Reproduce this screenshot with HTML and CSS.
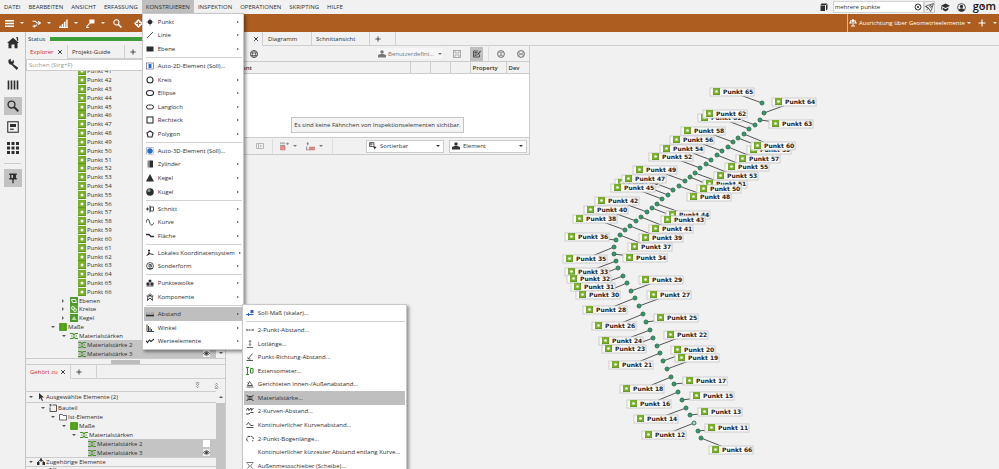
FILE: index.html
```html
<!DOCTYPE html>
<html lang="de">
<head>
<meta charset="utf-8">
<title>GOM Inspect</title>
<link rel="stylesheet" href="styles.css">
</head>
<body>
<svg class="sprite" aria-hidden="true">
  <symbol id="i-burger" viewBox="0 0 16 16"><path d="M0 3h16M0 8h16M0 13h16" stroke-width="2.6"/></symbol>
  <symbol id="i-swap" viewBox="0 0 16 16"><path d="M1 4h5l3 3h6M11 4l4 3-4 3M1 13h5l3-3M4 10v5" stroke-width="1.8"/></symbol>
  <symbol id="i-steps" viewBox="0 0 16 16"><path d="M0 15L16 0V15z" class="f" opacity=".35"/><path d="M2 15v-3M6 15V9M10 15V5M14 15V1M0 15h16" stroke-width="2"/></symbol>
  <symbol id="i-flag" viewBox="0 0 16 16"><path d="M6 1h9v7H8l-2 2z" class="f"/><path d="M6 8L1 14M0 15h5" stroke-width="2"/></symbol>
  <symbol id="i-search" viewBox="0 0 16 16"><circle cx="6" cy="6" r="4.6" stroke-width="1.8"/><path d="M9.5 9.5L15 15" stroke-width="2.8"/></symbol>
  <symbol id="i-target" viewBox="0 0 16 16"><path d="M8 0l8 8-8 8-8-8z" class="f"/><path d="M8 4v8M4 8h8" stroke="#ad5d20" stroke-width="2"/></symbol>
  <symbol id="i-scale" viewBox="0 0 16 16"><path d="M8 1v12M2 4h12M4 14h8" stroke-width="2"/><path d="M0 9l3-5 3 5zM10 9l3-5 3 5z" class="f"/><circle cx="8" cy="3" r="2.5" class="f"/></symbol>
  <symbol id="i-plus" viewBox="0 0 16 16"><path d="M8 1v14M1 8h14" stroke-width="2.2"/></symbol>
  <symbol id="i-x" viewBox="0 0 16 16"><path d="M3 3l10 10M13 3L3 13" stroke-width="2.6"/></symbol>
  <symbol id="i-home" viewBox="0 0 16 16"><path d="M8 1l8 7h-2v7h-4v-5H6v5H2V8H0z" class="f"/><path d="M12 1h2v4" stroke-width="1.6"/></symbol>
  <symbol id="i-wrench" viewBox="0 0 16 16"><path d="M2 6a4 4 0 0 1 3-5v3l2 1 1-3a4 4 0 0 1 0 6l7 5-2 3-7-7a4 4 0 0 1-4-3z" class="f"/></symbol>
  <symbol id="i-bars" viewBox="0 0 16 16"><path d="M2 2v12M6 2v12M10 2v12M14 2v12" stroke-width="2.2"/></symbol>
  <symbol id="i-doc" viewBox="0 0 16 16"><rect x="1" y="1" width="14" height="14" stroke-width="1.4"/><rect x="4" y="4" width="8" height="4" class="f"/><path d="M4 11h5" stroke-width="1.6"/></symbol>
  <symbol id="i-grid" viewBox="0 0 16 16"><path d="M0 0h4v4H0zM6 0h4v4H6zM12 0h4v4h-4zM0 6h4v4H0zM6 6h4v4H6zM12 6h4v4h-4zM0 12h4v4H0zM6 12h4v4H6zM12 12h4v4h-4z" class="f"/></symbol>
  <symbol id="i-pin" viewBox="0 0 16 16"><path d="M3 3h10M5 3v6M11 3v6M3 9h10M8 9v6" stroke-width="1.8"/><path d="M8 3h3v6H8z" class="f"/></symbol>
  <symbol id="i-cube" viewBox="0 0 16 16"><path d="M1 5h9v11H1zM3 1h12l-3 3H1zM12 5l3-3v10l-3 3z" class="f"/></symbol>
  <symbol id="i-clear" viewBox="0 0 16 16"><circle cx="8" cy="8" r="6" stroke-width="1.8"/><path d="M5 5l6 6M11 5l-6 6" stroke-width="1.6"/></symbol>
  <symbol id="i-rocket" viewBox="0 0 16 16"><path d="M1 6l5-2 9-3-3 9-2 5-3-5zM1 6l6 4M3 12l3-2" stroke-width="1.3"/><circle cx="10" cy="6" r="1.6" stroke-width="1.2"/></symbol>
  <symbol id="i-hat" viewBox="0 0 16 16"><path d="M0 5l8-4 8 4-8 4zM3 8l5 3 5-3v4l-5 3-5-3z" class="f"/><path d="M1 6v6" stroke-width="1.4"/></symbol>
  <symbol id="i-person" viewBox="0 0 16 16"><circle cx="8" cy="8" r="7" stroke-width="1.4"/><circle cx="8" cy="6" r="3" class="f"/><path d="M3 13c1-5 9-5 10 0-2 3-8 3-10 0z" class="f"/></symbol>
  <symbol id="i-users" viewBox="0 0 16 16"><circle cx="8" cy="4" r="3.5" class="f"/><path d="M0 15v-5l5-2h6l5 2v5z" class="f"/></symbol>
  <symbol id="i-save" viewBox="0 0 16 16"><rect x="1" y="1" width="14" height="14" stroke-width="1.6"/><path d="M4 1v5h8V1M4 15v-5h8v5" stroke-width="1.4"/></symbol>
  <symbol id="i-edit" viewBox="0 0 16 16"><path d="M13 9v5H1V2h9M3 5h6M3 8h5M3 11h4" stroke-width="1.6"/><path d="M15 2l-6 8" stroke-width="2.2"/></symbol>
  <symbol id="i-globe" viewBox="0 0 16 16"><circle cx="8" cy="8" r="7" stroke-width="1.6"/><ellipse cx="8" cy="8" rx="3" ry="7" stroke-width="1.2"/><path d="M1 6h14M1 11h14" stroke-width="1.2"/></symbol>
  <symbol id="i-up2" viewBox="0 0 16 16"><circle cx="8" cy="8" r="6.8" stroke-width="1.4"/><path d="M5 4l3 3 3-3M5 12l3-3 3 3" stroke-width="1.6"/></symbol>
  <symbol id="i-side2" viewBox="0 0 16 16"><circle cx="8" cy="8" r="6.8" stroke-width="1.4"/><path d="M4 5l3 3-3 3M12 5L9 8l3 3" stroke-width="1.6"/></symbol>
  <symbol id="i-box3" viewBox="0 0 16 16"><path d="M1 3h14v10H1zM5 3v10M8 6l3 2-3 2" stroke-width="1.3"/></symbol>
  <symbol id="i-rowsA" viewBox="0 0 16 16"><path d="M0 2h9M0 6h9M11 3h5M13 1v4" stroke-width="1.4"/><path d="M1 8h8v6H1z" fill="#d99" stroke="#c55"/></symbol>
  <symbol id="i-rowsB" viewBox="0 0 16 16"><path d="M3 0v6M1 3h4M1 8v6h4" stroke-width="1.4"/><path d="M6 9h4v5H6zM11 9h4v5h-4z" fill="#d99" stroke="#c55"/></symbol>
  <symbol id="i-sort" viewBox="0 0 16 16"><path d="M1 1h9v8H1zM1 4h9M4 1v8" stroke-width="1.4"/><path d="M8 8l7 2-4 5z" class="f"/></symbol>
  <symbol id="i-dot" viewBox="0 0 16 16"><circle cx="8" cy="8" r="4.5" class="f"/><path d="M8 1v14M1 8h14" stroke-width="1.2"/></symbol>
  <symbol id="i-line" viewBox="0 0 16 16"><path d="M2 14L14 2" stroke-width="1.6"/></symbol>
  <symbol id="i-plane" viewBox="0 0 16 16"><rect x="1" y="3" width="14" height="10" class="f"/></symbol>
  <symbol id="i-auto2" viewBox="0 0 16 16"><rect x="1" y="2" width="14" height="12" fill="#fff" stroke="#668" stroke-width="1.4"/><path d="M5 4h6v8H5z" fill="#2a6cc4" stroke="none"/></symbol>
  <symbol id="i-auto3" viewBox="0 0 16 16"><path d="M1 15V1h14" stroke="#99b" stroke-width="1.4"/><circle cx="8" cy="8" r="5.5" fill="#2a6cc4" stroke="none"/><path d="M15 3v12H3" stroke="#99b"/></symbol>
  <symbol id="i-circle" viewBox="0 0 16 16"><circle cx="8" cy="8" r="6" stroke-width="2.2"/></symbol>
  <symbol id="i-ellipse" viewBox="0 0 16 16"><ellipse cx="8" cy="8" rx="7" ry="5" stroke-width="2.2"/></symbol>
  <symbol id="i-slot" viewBox="0 0 16 16"><rect x="1" y="4" width="14" height="8" rx="4" stroke-width="2"/></symbol>
  <symbol id="i-rect" viewBox="0 0 16 16"><rect x="2" y="2" width="12" height="12" stroke-width="2.2"/></symbol>
  <symbol id="i-poly" viewBox="0 0 16 16"><path d="M8 2l6 4-2 8H4L2 6z" stroke-width="2.4"/></symbol>
  <symbol id="i-cyl" viewBox="0 0 16 16"><rect x="3" y="1" width="4" height="14" fill="#888" stroke="none"/><rect x="7" y="1" width="7" height="14" class="f"/></symbol>
  <symbol id="i-cone" viewBox="0 0 16 16"><path d="M8 0l8 15H0z" class="f"/></symbol>
  <symbol id="i-ball" viewBox="0 0 16 16"><circle cx="8" cy="8" r="7.5" class="f"/><circle cx="6" cy="5" r="3" fill="#999" stroke="none"/></symbol>
  <symbol id="i-cut" viewBox="0 0 16 16"><path d="M0 8h6M3 5v6M8 1v14" stroke-width="1.8"/><path d="M9 4h6v8H9z" stroke-width="1.6"/></symbol>
  <symbol id="i-curve" viewBox="0 0 16 16"><path d="M0 10c2-10 5-10 7-2s6 8 9 1" stroke-width="1.8"/></symbol>
  <symbol id="i-face" viewBox="0 0 16 16"><path d="M0 5h6l4 4h6" stroke-width="2.8"/></symbol>
  <symbol id="i-axes" viewBox="0 0 16 16"><path d="M6 1v8l9 2M6 9l-5 5M4 3h4M3 11h3" stroke-width="2"/><circle cx="6" cy="9" r="2" class="f"/></symbol>
  <symbol id="i-special" viewBox="0 0 16 16"><circle cx="8" cy="8" r="6.8" stroke-width="1.6"/><path d="M11 5H6v5h5V7H8M4 13h9" stroke-width="1.6"/></symbol>
  <symbol id="i-cloud" viewBox="0 0 16 16"><circle cx="8" cy="4" r="3" class="f"/><circle cx="4" cy="10" r="3.5" class="f"/><circle cx="12" cy="10" r="3.5" class="f"/><path d="M1 14h14" stroke-width="1.6"/></symbol>
  <symbol id="i-comp" viewBox="0 0 16 16"><path d="M8 1v5M1 6h14M4 6l-1 9 5-5 5 5-1-9M5 3l3 3 3-3" stroke-width="1.8"/></symbol>
  <symbol id="i-dist" viewBox="0 0 16 16"><path d="M0 6h3M5 6h3M10 6h6" stroke="#888" stroke-width="1.6"/><path d="M0 11h16" stroke-width="3.4"/></symbol>
  <symbol id="i-angle" viewBox="0 0 16 16"><path d="M2 1v14h14M5 4v10M8 7v7M11 10v4" stroke-width="1.8"/></symbol>
  <symbol id="i-value" viewBox="0 0 16 16"><path d="M0 7l3 4 4-5 3 3 6-5" stroke-width="2.2"/></symbol>
  <symbol id="i-soll" viewBox="0 0 16 16"><path d="M0 11h15M5 8v6" stroke="#2a62c0" stroke-width="2"/><path d="M9 2h6v6H9z" fill="#2a62c0" stroke="none"/></symbol>
  <symbol id="i-d2" viewBox="0 0 16 16"><path d="M0 8h4M5 8h3M9 8h2M12 8h4" stroke-width="2"/></symbol>
  <symbol id="i-perp" viewBox="0 0 16 16"><path d="M8 1v10M6 3l2-2 2 2M6 9l2 2 2-2M2 15h12" stroke-width="1.4"/></symbol>
  <symbol id="i-dir" viewBox="0 0 16 16"><path d="M13 1L5 11M1 15h13M3 9l2 3 4 0" stroke-width="1.6"/></symbol>
  <symbol id="i-ext" viewBox="0 0 16 16"><path d="M3 1v14M0 1h6M0 15h6M9 3h5v9H9M9 3v9" stroke="#3b8a2e" stroke-width="2"/></symbol>
  <symbol id="i-inner" viewBox="0 0 16 16"><path d="M1 14h14M3 11l4-8 6 8zM3 5l3 3" stroke-width="1.6"/></symbol>
  <symbol id="i-thick" viewBox="0 0 16 16"><path d="M1 3c4 3 10 3 14 0M1 13c4-3 10-3 14 0" stroke-width="2"/><path d="M8 5v6M3 8h3M10 8h3" stroke-width="1.8"/></symbol>
  <symbol id="i-kurv" viewBox="0 0 16 16"><path d="M0 7l4-5 2 5 4-5 1 5 4-5M0 14h6l3-3h6" stroke-width="1.8"/></symbol>
  <symbol id="i-kont" viewBox="0 0 16 16"><path d="M1 8l4-5 4 6h6M1 13h14" stroke-width="1.7"/></symbol>
  <symbol id="i-arc" viewBox="0 0 16 16"><path d="M4 13a6 6 0 0 1 0-10h8a6 6 0 0 1 0 10" stroke-width="1.8" stroke-dasharray="7 2"/></symbol>
  <symbol id="i-caliper" viewBox="0 0 16 16"><path d="M1 1h14M1 15h14M3 3l4 5-4 5M13 3L9 8l4 5" stroke-width="1.3"/></symbol>
  <symbol id="i-eye" viewBox="0 0 16 16"><path d="M1 8q7-8 14 0q-7 8-14 0z" stroke-width="1.6"/><circle cx="8" cy="8" r="3" class="f"/></symbol>
  <symbol id="i-point" viewBox="0 0 16 16"><rect width="16" height="16" fill="#78b02c" stroke="none"/><path d="M0 15h16V0" stroke="#5a8f20" stroke-width="1.6"/><circle cx="8" cy="8" r="3" fill="#fff" stroke="none"/></symbol>
  <symbol id="i-gplane" viewBox="0 0 16 16"><rect width="16" height="16" fill="#4e9a2e" stroke="none"/><path d="M3 5h8l2 6H5z" stroke="#fff" stroke-width="1.8"/></symbol>
  <symbol id="i-gcirc" viewBox="0 0 16 16"><rect width="16" height="16" fill="#5aa535" stroke="none"/><circle cx="6" cy="6" r="3" stroke="#fff" stroke-width="1.6"/><circle cx="10" cy="10" r="3" stroke="#fff" stroke-width="1.6"/></symbol>
  <symbol id="i-gcone" viewBox="0 0 16 16"><rect width="16" height="16" fill="#4e9a2e" stroke="none"/><path d="M3 12l5-8 5 8z" fill="#b8dda0" stroke="none"/></symbol>
  <symbol id="i-gmass" viewBox="0 0 16 16"><rect width="16" height="16" rx="2" fill="#5ba820" stroke="none"/><path d="M4 0v16M12 0v16" stroke="#3f8a12"/></symbol>
  <symbol id="i-gthick" viewBox="0 0 16 16"><path d="M0 3h5l3 2 3-2h5M0 13h5l3-2 3 2h5" stroke="#46912a" stroke-width="2.2"/><path d="M8 5v6M2 8h3M11 8h3" stroke="#46912a" stroke-width="1.6"/></symbol>
  <symbol id="i-cursor" viewBox="0 0 16 16"><path d="M4 0v13l3-3 3 6 2-1-3-6h5z" class="f"/></symbol>
  <symbol id="i-part" viewBox="0 0 16 16"><path d="M1 4h3M1 1h3v3M7 2h8v13H2V7" stroke-width="1.6"/></symbol>
  <symbol id="i-folder" viewBox="0 0 16 16"><path d="M1 3h6l1 2h7v9H1z" fill="#fff" stroke-width="1.4"/></symbol>
  <symbol id="i-link" viewBox="0 0 16 16"><path d="M3 8c0-5 10-5 10 0M8 3v5" stroke-width="2"/><path d="M0 8h5v6H0zM11 8h5v6h-5zM6 1h4v4H6z" class="f"/></symbol>
  <symbol id="i-dn" viewBox="0 0 16 16"><path d="M4 2h8M5 5l3 3 3-3M5 10l3 3 3-3" stroke-width="1.8"/></symbol>
  <symbol id="i-upp" viewBox="0 0 16 16"><path d="M5 6l3-3 3 3M5 11l3-3 3 3M4 14h8" stroke-width="1.8"/></symbol>
</svg>

<header class="menubar">
  <nav class="menus" aria-label="Hauptmenü">
    <button>DATEI</button>
    <button>BEARBEITEN</button>
    <button>ANSICHT</button>
    <button>ERFASSUNG</button>
    <div class="menu-host">
      <button class="open">KONSTRUIEREN</button>
      <ul class="menu">
        <li><svg><use href="#i-dot"/></svg><a href="#">Punkt</a><i></i></li>
        <li><svg><use href="#i-line"/></svg><a href="#">Linie</a><i></i></li>
        <li><svg><use href="#i-plane"/></svg><a href="#">Ebene</a><i></i></li>
        <li class="sep"></li>
        <li><svg><use href="#i-auto2"/></svg><a href="#">Auto-2D-Element (Soll)...</a></li>
        <li><svg><use href="#i-circle"/></svg><a href="#">Kreis</a><i></i></li>
        <li><svg><use href="#i-ellipse"/></svg><a href="#">Ellipse</a><i></i></li>
        <li><svg><use href="#i-slot"/></svg><a href="#">Langloch</a><i></i></li>
        <li><svg><use href="#i-rect"/></svg><a href="#">Rechteck</a><i></i></li>
        <li><svg><use href="#i-poly"/></svg><a href="#">Polygon</a><i></i></li>
        <li class="sep"></li>
        <li><svg><use href="#i-auto3"/></svg><a href="#">Auto-3D-Element (Soll)...</a></li>
        <li><svg><use href="#i-cyl"/></svg><a href="#">Zylinder</a><i></i></li>
        <li><svg><use href="#i-cone"/></svg><a href="#">Kegel</a><i></i></li>
        <li><svg><use href="#i-ball"/></svg><a href="#">Kugel</a><i></i></li>
        <li class="sep"></li>
        <li><svg><use href="#i-cut"/></svg><a href="#">Schnitt</a><i></i></li>
        <li><svg><use href="#i-curve"/></svg><a href="#">Kurve</a><i></i></li>
        <li><svg><use href="#i-face"/></svg><a href="#">Fläche</a><i></i></li>
        <li class="sep"></li>
        <li><svg><use href="#i-axes"/></svg><a href="#">Lokales Koordinatensystem</a><i></i></li>
        <li><svg><use href="#i-special"/></svg><a href="#">Sonderform</a><i></i></li>
        <li class="sep"></li>
        <li><svg><use href="#i-cloud"/></svg><a href="#">Punktewolke</a><i></i></li>
        <li><svg><use href="#i-comp"/></svg><a href="#">Komponente</a><i></i></li>
        <li class="sep"></li>
        <li class="hot"><svg><use href="#i-dist"/></svg><a href="#">Abstand</a><i></i>
          <ul class="menu submenu">
            <li><svg><use href="#i-soll"/></svg><a href="#">Soll-Maß (skalar)...</a></li>
            <li class="sep"></li>
            <li><svg><use href="#i-d2"/></svg><a href="#">2-Punkt-Abstand...</a></li>
            <li><svg><use href="#i-perp"/></svg><a href="#">Lotlänge...</a></li>
            <li><svg><use href="#i-dir"/></svg><a href="#">Punkt-Richtung-Abstand...</a></li>
            <li><svg><use href="#i-ext"/></svg><a href="#">Extensometer...</a></li>
            <li><svg><use href="#i-inner"/></svg><a href="#">Gerichteten Innen-/Außenabstand...</a></li>
            <li class="hot"><svg><use href="#i-thick"/></svg><a href="#">Materialstärke...</a></li>
            <li><svg><use href="#i-kurv"/></svg><a href="#">2-Kurven-Abstand...</a></li>
            <li><svg><use href="#i-kont"/></svg><a href="#">Kontinuierlicher Kurvenabstand...</a></li>
            <li><svg><use href="#i-arc"/></svg><a href="#">2-Punkt-Bogenlänge...</a></li>
            <li><svg></svg><a href="#">Kontinuierlicher kürzester Abstand entlang Kurve...</a></li>
            <li><svg><use href="#i-caliper"/></svg><a href="#">Außenmessschieber (Scheibe)...</a></li>
          </ul>
        </li>
        <li><svg><use href="#i-angle"/></svg><a href="#">Winkel</a><i></i></li>
        <li><svg><use href="#i-value"/></svg><a href="#">Werteelemente</a><i></i></li>
      </ul>
    </div>
    <button>INSPEKTION</button>
    <button>OPERATIONEN</button>
    <button>SKRIPTING</button>
    <button>HILFE</button>
  </nav>
  <div class="account">
    <svg><use href="#i-cube"/></svg>
    <div class="search">
      <input type="text" value="mehrere punkte" aria-label="Befehl suchen">
      <button aria-label="Löschen"><svg><use href="#i-clear"/></svg></button>
    </div>
    <button class="rocket" aria-label="Ausführen"><svg><use href="#i-rocket"/></svg></button>
    <button aria-label="Lernen"><svg><use href="#i-hat"/></svg></button>
    <button aria-label="Konto"><svg><use href="#i-person"/></svg></button>
    <span class="logo">gom</span>
  </div>
</header>

<div class="toolbar">
  <div class="tool"><button aria-label="Menü"><svg><use href="#i-burger"/></svg></button><i></i></div>
  <div class="tool"><button aria-label="Import"><svg><use href="#i-swap"/></svg></button><i></i></div>
  <div class="tool"><button aria-label="Stufen"><svg><use href="#i-steps"/></svg></button><i></i></div>
  <div class="tool"><button aria-label="Fähnchen"><svg><use href="#i-flag"/></svg></button><i></i></div>
  <div class="tool short"><button aria-label="Suchen"><svg><use href="#i-search"/></svg></button></div>
  <div class="tool"><button aria-label="Ziel"><svg><use href="#i-target"/></svg></button></div>
  <div class="align">
    <svg><use href="#i-scale"/></svg>
    <button>Ausrichtung über Geometrieelemente</button><i></i>
    <button class="add" aria-label="Neu"><svg><use href="#i-plus"/></svg></button><i></i>
  </div>
</div>

<main class="work">
  <aside class="rail">
    <button aria-label="Start"><svg><use href="#i-home"/></svg></button>
    <button aria-label="Werkzeug"><svg><use href="#i-wrench"/></svg></button>
    <button aria-label="Ansichten"><svg><use href="#i-bars"/></svg></button>
    <button class="on" aria-label="Suche"><svg><use href="#i-search"/></svg></button>
    <button aria-label="Bericht"><svg><use href="#i-doc"/></svg></button>
    <button aria-label="Raster"><svg><use href="#i-grid"/></svg></button>
    <hr>
    <button class="on" aria-label="Anheften"><svg><use href="#i-pin"/></svg></button>
  </aside>

  <section class="side">
    <div class="status"><span>Status</span><div class="bar"></div></div>
    <div class="tabs">
      <div class="tab active explorer-tab"><a href="#">Explorer</a><svg><use href="#i-x"/></svg></div>
      <div class="tab guide-tab"><a href="#">Projekt-Guide</a></div>
      <button class="tab new" aria-label="Neuer Reiter"><svg><use href="#i-plus"/></svg></button>
    </div>
    <input class="find" type="text" placeholder="Suchen (Strg+F)" aria-label="Suchen">
    <div class="tree-view">
      <ul class="tree" id="tree">
        <li class="l3"><b></b><svg><use href="#i-gplane"/></svg>Ebenen</li>
        <li class="l3"><b></b><svg><use href="#i-gcirc"/></svg>Kreise</li>
        <li class="l3"><b></b><svg><use href="#i-gcone"/></svg>Kegel</li>
        <li class="l2"><b class="down"></b><svg><use href="#i-gmass"/></svg>Maße</li>
        <li class="l3"><b class="down"></b><svg><use href="#i-gthick"/></svg>Materialstärken</li>
        <li class="l4"><span class="pick"><svg><use href="#i-gthick"/></svg>Materialstärke 2</span></li>
        <li class="l4"><span class="pick"><svg><use href="#i-gthick"/></svg>Materialstärke 3<svg class="eye"><use href="#i-eye"/></svg></span></li>
      </ul>
      <div class="scroll"><b class="down"></b></div>
    </div>
    <div class="hscroll"><span></span></div>
    <div class="related">
      <div class="tabs">
        <div class="tab active related-tab"><a href="#">Gehört zu</a><svg><use href="#i-x"/></svg></div>
        <button class="tab new" aria-label="Neuer Reiter"><svg><use href="#i-plus"/></svg></button>
      </div>
      <div class="related-tools">
        <button aria-label="Aufklappen"><svg><use href="#i-dn"/></svg></button>
        <button aria-label="Zuklappen"><svg><use href="#i-upp"/></svg></button>
      </div>
      <div class="related-body">
        <ul class="tree">
          <li class="head"><b class="down"></b><svg><use href="#i-cursor"/></svg>Ausgewählte Elemente (2)</li>
          <li class="l1"><b class="down"></b><svg><use href="#i-part"/></svg>Bauteil</li>
          <li class="l2"><b class="down"></b><svg><use href="#i-folder"/></svg>Ist-Elemente</li>
          <li class="l3"><b class="down"></b><svg><use href="#i-gmass"/></svg>Maße</li>
          <li class="l4 wide"><b class="down"></b><svg><use href="#i-gthick"/></svg>Materialstärken</li>
          <li class="l5"><span class="pick"><svg><use href="#i-gthick"/></svg>Materialstärke 2<svg class="eye off"></svg></span></li>
          <li class="l5"><span class="pick"><svg><use href="#i-gthick"/></svg>Materialstärke 3<svg class="eye"><use href="#i-eye"/></svg></span></li>
          <li class="head second"><b class="down"></b><svg><use href="#i-link"/></svg>Zugehörige Elemente</li>
          <li class="l1"><b class="down"></b><svg><use href="#i-part"/></svg></li>
        </ul>
        <div class="scroll full"><b class="up"></b><span></span></div>
      </div>
    </div>
  </section>

  <section class="view">
    <div class="tabs view-tabs">
      <div class="tab active table-tab"><a href="#">Tabelle</a><svg><use href="#i-x"/></svg></div>
      <div class="tab diagram-tab"><a href="#">Diagramm</a></div>
      <div class="tab section-tab"><a href="#">Schnittansicht</a></div>
      <button class="tab new" aria-label="Neuer Reiter"><svg><use href="#i-plus"/></svg></button>
    </div>
    <div class="stage">
      <div class="flags">
        <div class="flags-top">
          <svg class="globe"><use href="#i-globe"/></svg>
          <div class="pickbox user"><svg><use href="#i-users"/></svg>
            <select aria-label="Vorlage"><option>Benutzerdefini...</option></select><i></i></div>
          <button class="save" aria-label="Speichern"><svg><use href="#i-save"/></svg></button>
          <button class="on" aria-label="Bearbeiten"><svg><use href="#i-edit"/></svg></button>
          <hr>
          <button aria-label="Höhe anpassen"><svg><use href="#i-up2"/></svg></button>
          <button aria-label="Breite anpassen"><svg><use href="#i-side2"/></svg></button>
        </div>
        <table>
          <thead><tr><th>Element</th><th class="slim"></th><th class="slim"></th><th class="slim"></th><th class="prop">Property</th><th class="dev">Dev</th></tr></thead>
        </table>
        <div class="empty"><p>Es sind keine Fähnchen von Inspektionselementen sichtbar.</p></div>
        <div class="flags-bottom">
          <svg class="mini"><use href="#i-box3"/></svg>
          <hr>
          <div class="tool"><svg><use href="#i-rowsA"/></svg><i></i></div>
          <div class="tool"><svg><use href="#i-rowsB"/></svg><i></i></div>
          <hr>
          <div class="pickbox sort"><svg><use href="#i-sort"/></svg>
            <select aria-label="Sortierung"><option>Sortierbar</option></select><i></i></div>
          <div class="pickbox"><svg><use href="#i-users"/></svg>
            <select aria-label="Gruppierung"><option>Element</option></select><i></i></div>
        </div>
      </div>
      <svg class="scene" id="scene" role="img" aria-label="Messpunkte"></svg>
    </div>
  </section>
</main>
<script src="points.js"></script>
</body>
</html>
```

FILE: styles.css
```css
* { box-sizing: border-box; }

html, body { height: 100%; }

body {
  margin: 0;
  display: flex;
  flex-direction: column;
  overflow: hidden;
  background: #f1f1f1;
  color: #2e2e2e;
  font: 6px/8px "Open Sans", "Noto Sans", sans-serif;
}

ul { list-style: none; margin: 0; padding: 0; }
a { color: inherit; text-decoration: none; }
hr { margin: 0; border: 0; }

button {
  margin: 0;
  padding: 0;
  border: 0;
  background: none;
  color: inherit;
  font: inherit;
  display: flex;
  align-items: center;
  justify-content: center;
}

svg {
  flex: none;
  width: 8px;
  height: 8px;
  fill: none;
  stroke: currentColor;
}

.f { fill: currentColor; stroke: none; }
.sprite { position: absolute; width: 0; height: 0; }

/* small drop-down carets */
i {
  flex: none;
  width: 0;
  height: 0;
  border: 2px solid transparent;
  border-top-color: currentColor;
  border-bottom: 0;
}

/* menu bar */
.menubar {
  flex: none;
  height: 14px;
  display: flex;
  justify-content: space-between;
}

.menus { display: flex; }
.menus > button, .menu-host > button { padding: 0 4px; height: 13px; }
.menu-host { position: relative; }
.menu-host > .open { background: #bfbfbf; }

.account { display: flex; align-items: center; gap: 6px; padding-right: 3px; }
.account > svg { margin-right: -1px; }

.search {
  display: flex;
  align-items: center;
  width: 91px;
  height: 12px;
  background: #fff;
  border: 1px solid #d4d4d4;
}

.search input {
  flex: 1;
  min-width: 0;
  border: 0;
  padding: 0 1px;
  background: none;
  color: inherit;
  font: inherit;
}

.search button { width: 10px; }
.account .rocket { width: 11px; height: 12px; margin-left: -6px; border: 1px solid #ccc; }
.account > button { width: 10px; }
.account > button svg { width: 9px; height: 9px; }

.logo {
  position: relative;
  font: 600 11px/11px "Open Sans", sans-serif;
  color: #111;
  height: 14px;
}

.logo::after {
  content: "";
  position: absolute;
  left: 9px;
  top: 5px;
  width: 2px;
  height: 2px;
  background: #e02020;
}

/* menus */
.menu {
  position: absolute;
  z-index: 10;
  left: 0;
  top: 13px;
  width: 102px;
  height: 337px;
  padding: 1px;
  display: flex;
  flex-direction: column;
  background: #fff;
  border: 1px solid #c8c8c8;
  box-shadow: 2px 2px 3px rgba(0, 0, 0, .4);
}

.menu li {
  position: relative;
  flex: 27 1 0;
  display: flex;
  align-items: center;
  gap: 4px;
  min-height: 0;
  padding-left: 2px;
  white-space: nowrap;
}

.menu .sep { flex: 7 1 0; }
.menu .sep::before { content: ""; width: 100%; height: 1px; background: #d2d2d2; }
.menu .hot { background: #bfbfbf; }
.menu a { flex: 1; }

.menu i {
  border: 1px solid transparent;
  border-left: 2px solid #444;
  border-right: 0;
  margin-right: 3px;
}

.menu .submenu { left: 98px; top: -3px; width: 165px; height: 170px; }

/* main tool bar */
.toolbar {
  flex: none;
  height: 18px;
  display: flex;
  padding-left: 2px;
  background: #ad5d20;
  color: #fff;
}

.tool { display: flex; align-items: center; width: 27px; }
.tool button { width: 14px; margin-right: 4px; }
.tool.short { width: 21px; }
.toolbar .tool svg { width: 9px; height: 9px; }

.align {
  margin-left: auto;
  display: flex;
  align-items: center;
  gap: 2px;
  padding: 0 2px 0 1px;
  border-left: 1px solid #dcb594;
}

.align .add { width: 18px; }

/* work area */
.work { flex: 1; min-height: 0; display: flex; }

.rail {
  flex: none;
  width: 26px;
  padding: 2px 4px;
  display: flex;
  flex-direction: column;
  gap: 3px;
  border-right: 1px solid #c4c4c4;
}

.rail button { width: 18px; height: 18px; }
.rail svg { width: 12px; height: 12px; }
.rail .on { background: #c2c2c2; }
.rail hr { height: 1px; margin: 3px 0 2px; background: #ccc; }

.side { flex: none; width: 200px; display: flex; flex-direction: column; }

.status { flex: none; height: 13px; display: flex; align-items: center; gap: 5px; padding-left: 2px; }
.status .bar { flex: 1; height: 4px; background: #3c9f3c; }

.tabs { flex: none; display: flex; height: 14px; border-bottom: 1px solid #cfcfcf; }

.tab {
  display: flex;
  align-items: center;
  justify-content: center;
  height: 13px;
  padding: 0 4px;
  border-right: 1px solid #d0d0d0;
}

.tab svg { width: 6px; height: 6px; }
.tab.active { color: #d02a3c; height: 14px; background: #f1f1f1; justify-content: space-between; }
.tab.active svg { color: #333; }
.tab.new { width: 26px; justify-content: flex-start; padding: 0 5px; }
.explorer-tab { width: 42px; }
.guide-tab { width: 57px; justify-content: flex-start; }
.related-tab { width: 45px; }

.find {
  flex: none;
  height: 12px;
  margin: 0;
  padding: 0 2px;
  border: 1px solid #ccc;
  background: #fff;
  font: inherit;
}

.find::placeholder { color: #999; }

/* trees */
.tree-view { flex: 1; min-height: 0; display: flex; overflow: hidden; border-right: 1px solid #ccc; }
.tree { flex: 1; min-width: 0; }
.tree-view .tree { display: grid; grid-auto-rows: 1fr; margin-top: -4px; }
.tree li { display: flex; align-items: center; height: 9px; white-space: nowrap; }
.tree-view .tree li { height: auto; min-height: 0; }
.tree svg { margin-right: 1px; }
.tree .l1 { padding-left: 13px; }
.tree .l2 { padding-left: 23px; }
.tree .l3 { padding-left: 34px; }
.tree .l4 { padding-left: 52px; }
.tree .l4.wide { padding-left: 44px; }
.tree .l5 { padding-left: 62px; }
.tree .pick { flex: 1; display: flex; align-items: center; background: #c4c4c4; height: 100%; }
.tree svg.eye { margin: 0 6px 0 auto; width: 7px; height: 7px; background: #ececec; }
.tree svg.eye.off { background: #fff; }

.tree b {
  flex: none;
  width: 3px;
  margin: 0 5px 0 2px;
  border: 2px solid transparent;
  border-left-color: #666;
  border-right: 0;
}

.tree b.down, .scroll b {
  border: 2px solid transparent;
  border-top-color: #555;
  border-bottom: 0;
  width: 4px;
  margin: 0 4px 0 2px;
}

.tree .head { height: 12px; border-top: 1px solid #ccc; border-bottom: 1px solid #ccc; padding-left: 1px; }
.tree .second { height: 10px; }

.scroll { width: 9px; display: flex; flex-direction: column; align-items: center; justify-content: flex-end; padding-bottom: 4px; }
.scroll b { margin: 0; }
.scroll b.up { margin: 5px 0; border: 2px solid transparent; border-top: 0; border-bottom-color: #555; }
.scroll.full { justify-content: flex-start; padding: 0; }
.scroll.full span { flex: 1; width: 9px; background: #c4c4c4; }

.hscroll { flex: none; height: 7px; border: 1px solid #ccc; border-left: 0; display: flex; justify-content: center; padding-top: 1px; }
.hscroll span { width: 29px; height: 4px; background: #bdbdbd; }

.related { flex: none; height: 104px; overflow: hidden; border-right: 1px solid #ccc; }
.related-tools { height: 12px; display: flex; align-items: center; justify-content: flex-end; gap: 12px; padding-right: 5px; color: #666; }
.related-tools svg { width: 7px; height: 7px; }
.related-body { display: flex; height: 79px; }

/* view area */
.view { flex: 1; min-width: 0; display: flex; flex-direction: column; }
.view-tabs .tab { padding: 0 5px; justify-content: flex-start; }
.view-tabs .table-tab { width: 37px; padding: 0 3px 0 0; justify-content: flex-end; gap: 9px; }
.view-tabs .diagram-tab { width: 49px; }
.view-tabs .section-tab { width: 58px; padding: 0 4px; }

.stage { flex: 1; min-height: 0; display: flex; align-items: flex-start; }
.flags { flex: none; width: 304px; border-right: 1px solid #ccc; border-bottom: 1px solid #ccc; color: #333; }
.flags button { width: 13px; height: 14px; }
.flags button.on { background: #bfbfbf; }

.flags-top { height: 15px; display: flex; align-items: center; gap: 7px; padding-right: 2px; }
.flags-top .globe { margin: 0 auto 0 24px; }
.flags-top .save { color: #999; }
.flags-top hr { width: 1px; height: 14px; background: #ddd; margin: 0 -2px; }

.pickbox { display: flex; align-items: center; width: 78px; height: 13px; padding: 0 3px 0 2px; gap: 3px; background: #fff; border: 1px solid #ccc; }
.pickbox select { flex: 1; min-width: 0; appearance: none; border: 0; padding: 0; background: none; color: inherit; font: inherit; }
.pickbox.user { width: 68px; padding: 0 1px; gap: 2px; margin-right: -1px; color: #777; border-color: #eee; background: #f6f6f6; }

table { width: 100%; height: 13px; table-layout: fixed; border-collapse: collapse; border-top: 1px solid #ccc; border-bottom: 1px solid #ccc; }
th { padding: 0 2px; text-align: left; font-weight: 600; border-right: 1px solid #ccc; }
th:last-child { border-right: 0; }
th.slim { width: 20px; }
th.prop { width: 36px; }
th.dev { width: 23px; }

.empty { height: 63px; background: #fff; display: flex; align-items: flex-end; justify-content: center; padding-bottom: 4px; }
.empty p { margin: 0; padding: 3px 2px; border: 1px solid #c4c4c4; background: #f4f4f4; }

.flags-bottom { height: 17px; display: flex; align-items: center; border-top: 1px solid #ccc; padding-right: 2px; }
.flags-bottom .mini { margin: 0 8px 0 30px; color: #999; }
.flags-bottom hr { width: 1px; height: 15px; background: #ddd; margin-right: 7px; }
.flags-bottom hr + .pickbox { margin-left: auto; }
.flags-bottom .sort { margin-right: 5px; }
.flags-bottom .tool { gap: 4px; width: 26px; color: #777; }
.flags-bottom .tool svg { width: 9px; height: 9px; }

.scene { flex: 1; align-self: stretch; width: auto; height: auto; min-width: 0; overflow: hidden; }
.scene line { stroke: #555; stroke-width: 1; }
.scene circle { fill: #25a065; stroke: #40705a; stroke-width: 1; }
.scene circle.pale { fill: #b4ddc8; }
.scene .card { fill: #fcfcfc; stroke: #ccc; stroke-width: 1; }
.scene text { font: 700 6px "DejaVu Sans", sans-serif; fill: #222; stroke: none; }
```

FILE: points.js
```javascript
// [number, label left, label middle, point x, point y], listed back to front
const points = [
  [61, 698, 118, 749, 129], [59, 747, 150, 738, 138], [51, 703, 184, 695, 173],
  [46, 615, 183, 668, 195], [44, 666, 215, 657, 204],
  [65, 710, 92, 762, 103], [64, 772, 102, 764, 113], [63, 769, 124, 760, 120],
  [62, 703, 114, 755, 125], [60, 751, 146, 744, 134], [58, 681, 131, 733, 142],
  [57, 736, 159, 728, 147], [56, 670, 140, 722, 151], [55, 725, 167, 717, 155],
  [54, 660, 149, 711, 160], [53, 714, 176, 706, 164], [52, 649, 157, 700, 168],
  [50, 697, 189, 690, 177], [49, 633, 170, 685, 181], [48, 687, 197, 679, 186],
  [47, 622, 179, 673, 190], [45, 611, 188, 662, 199], [43, 661, 220, 652, 208],
  [42, 595, 201, 647, 212], [41, 649, 229, 641, 217], [40, 584, 210, 636, 221],
  [39, 639, 238, 630, 226], [38, 573, 219, 625, 230], [37, 628, 247, 620, 235],
  [36, 565, 237, 616, 240], [35, 563, 259, 614, 247], [34, 623, 258, 614, 254],
  [33, 565, 272, 616, 261], [32, 567, 279, 618, 268], [31, 571, 287, 623, 276],
  [30, 576, 295, 627, 283], [29, 639, 280, 631, 291], [28, 583, 310, 635, 298],
  [27, 647, 295, 639, 306], [26, 592, 326, 643, 314], [25, 654, 318, 646, 322],
  [24, 599, 341, 650, 330], [23, 602, 349, 653, 338], [22, 664, 335, 657, 346],
  [21, 609, 365, 660, 353], [20, 671, 350, 663, 361], [19, 675, 358, 667, 369],
  [18, 620, 389, 671, 377], [17, 683, 381, 674, 384], [16, 627, 404, 678, 392],
  [15, 690, 396, 682, 400], [14, 634, 419, 686, 408], [13, 698, 412, 690, 415],
  [12, 642, 435, 694, 423], [11, 705, 428, 698, 431], [66, 709, 450, 701, 438]
];

// origin of the scene inside the window
const ox = 530;
const oy = 46;

const lines = points.map(([, x, y, px, py]) =>
  `<line x1="${px - ox}" y1="${py - oy}" x2="${x + 22 - ox}" y2="${y - oy}"/>`);
const dots = points.map(([n, , , px, py]) =>
  `<circle cx="${px - ox}" cy="${py - oy}" r="2"${n === 12 ? ' class="pale"' : ''}/>`);
const cards = points.map(([n, x, y]) =>
  `<g transform="translate(${x - ox} ${y - oy})">
    <rect class="card" x="0" y="-4" width="44" height="8"/>
    <use href="#i-point" x="3" y="-4" width="7" height="7"/>
    <text x="13" y="2">Punkt ${n}</text>
  </g>`);
document.getElementById('scene').innerHTML = lines.join('') + dots.join('') + cards.join('');

let rows = '';
for (let n = 41; n <= 66; n++) {
  rows += `<li class="l4"><svg><use href="#i-point"/></svg>Punkt ${n}</li>`;
}
document.getElementById('tree').insertAdjacentHTML('afterbegin', rows);
```
